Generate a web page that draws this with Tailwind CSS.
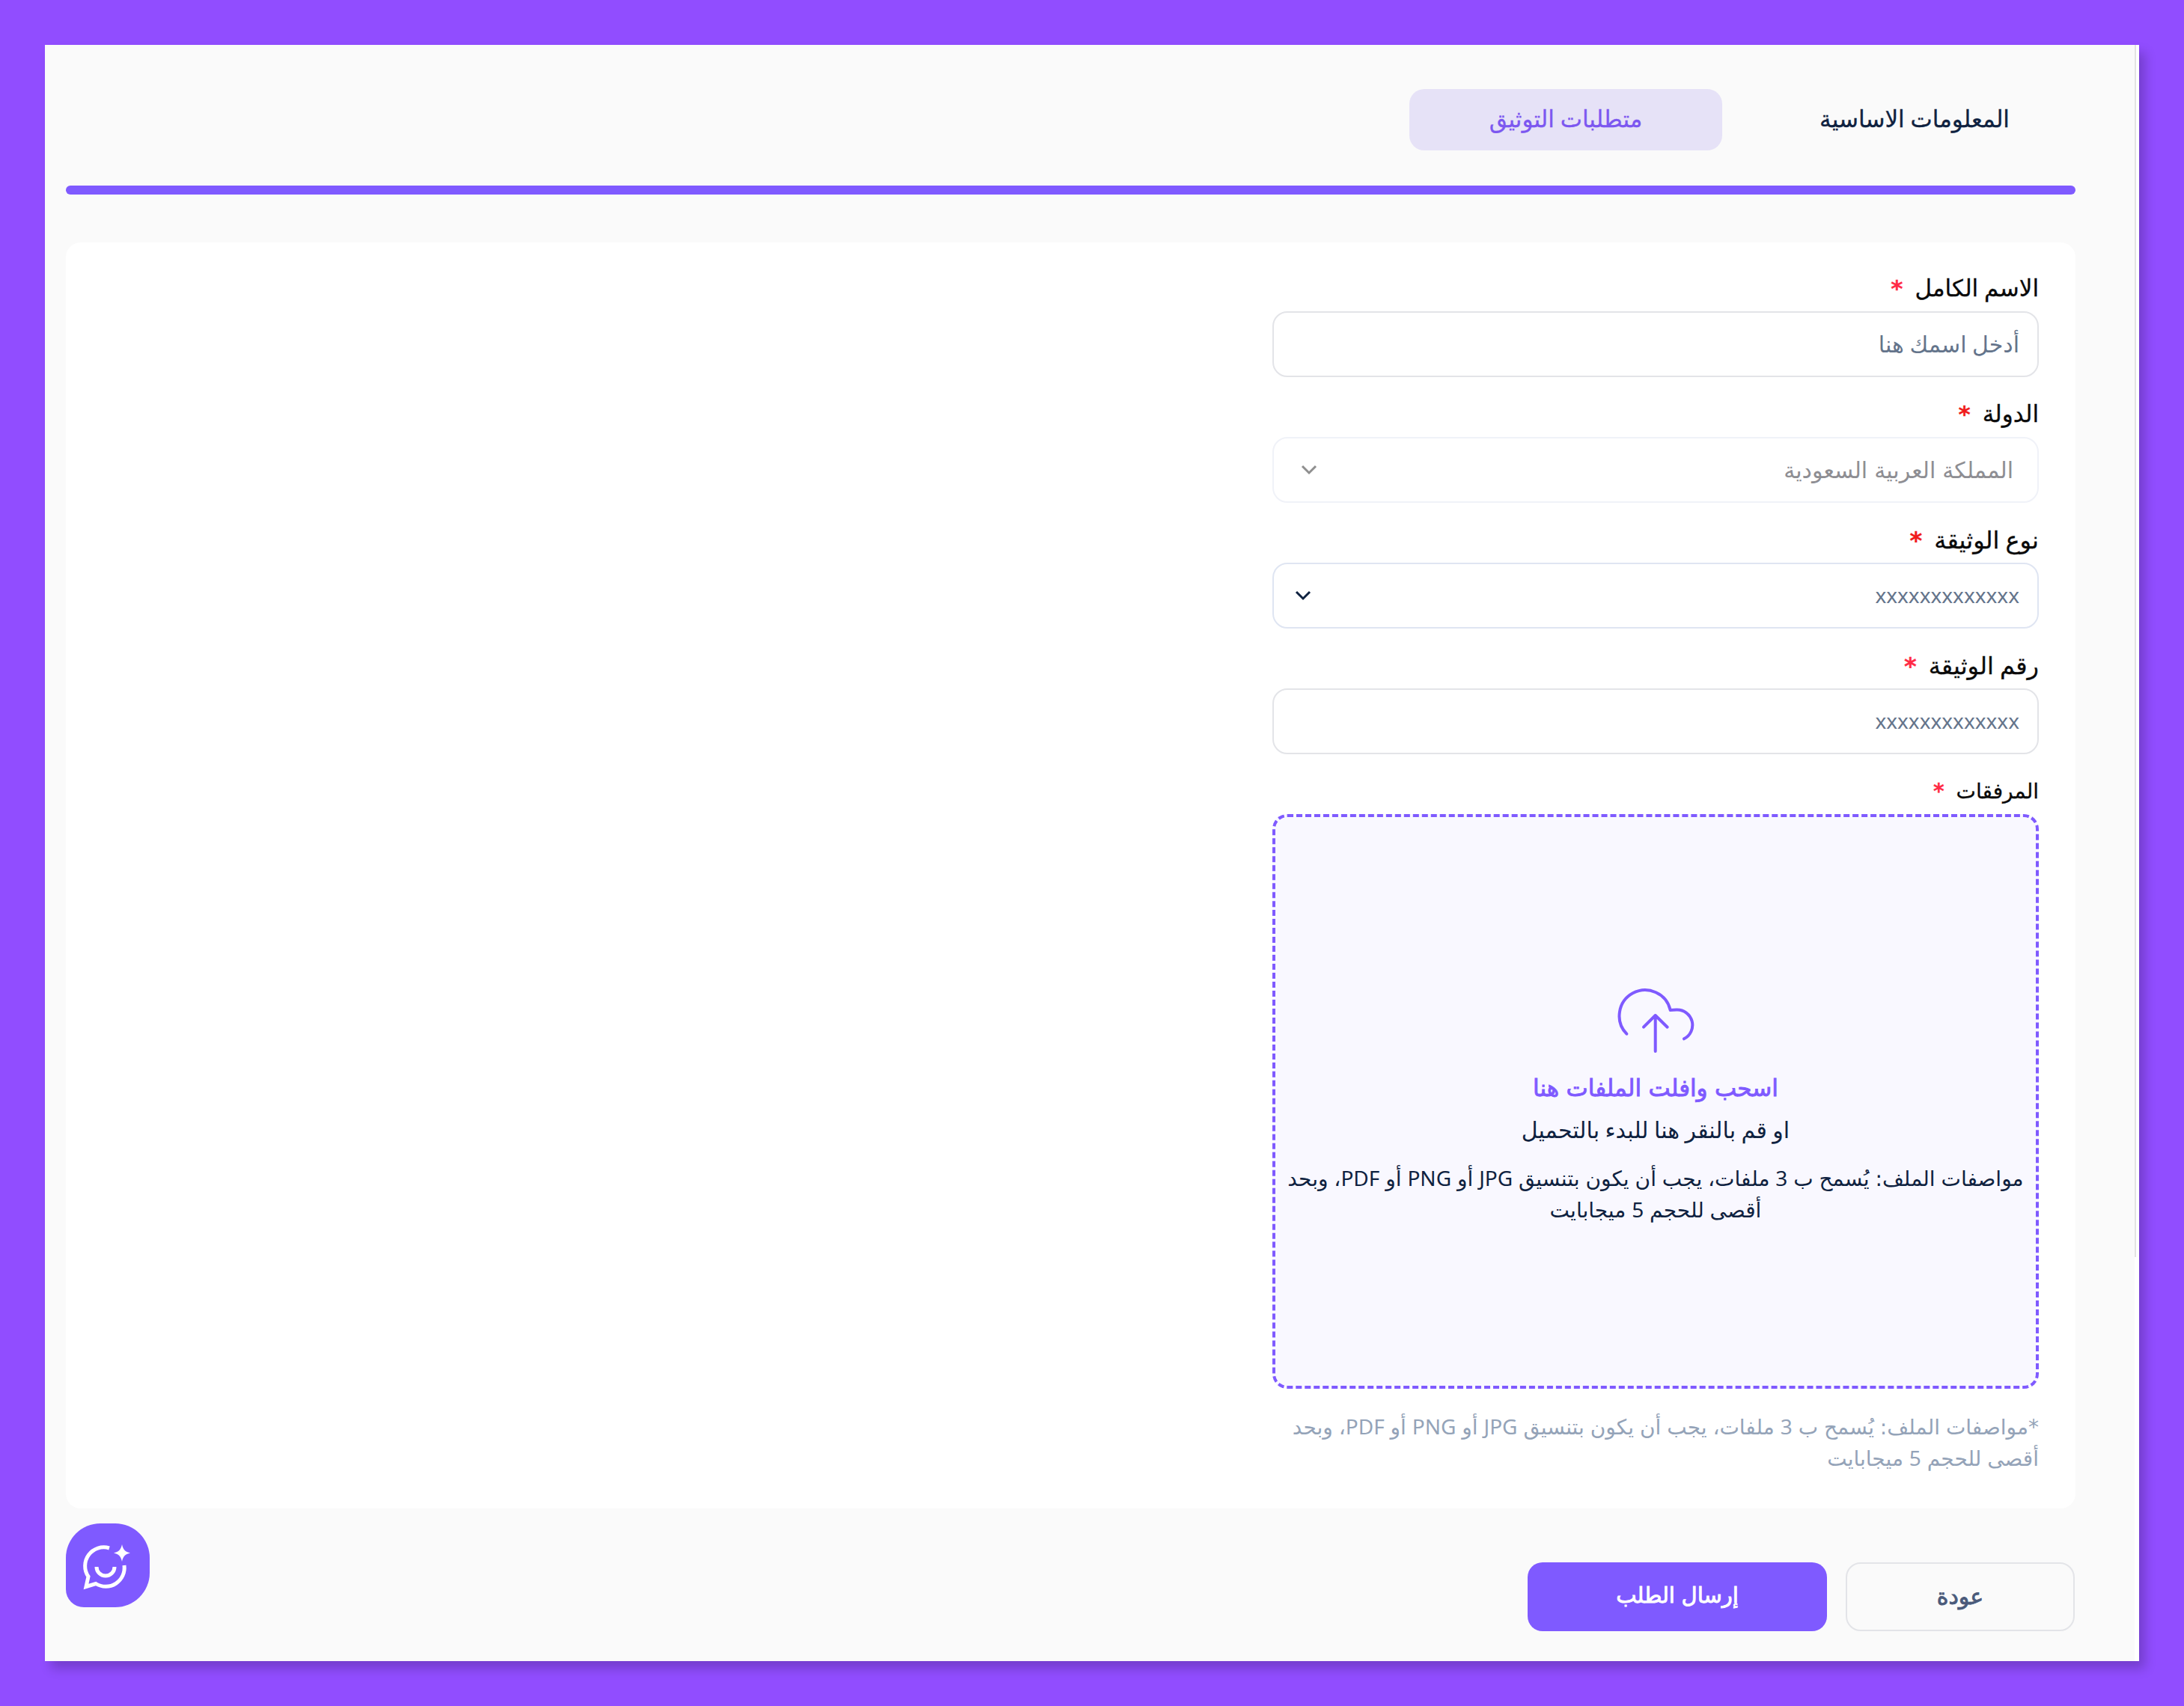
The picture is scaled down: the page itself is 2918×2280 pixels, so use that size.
<!DOCTYPE html>
<html dir="rtl" lang="ar"><head><meta charset="utf-8"><title>متطلبات التوثيق</title><script src="https://cdn.jsdelivr.net/npm/@tailwindcss/browser@4"></script></head>
<body class="m-0 bg-[#914dff]">
<div dir="ltr" class="w-[2918px] h-[2280px] p-[60px] font-['DejaVu_Sans',sans-serif] [word-spacing:-0.5px]">
<div dir="rtl" class="relative w-[2798px] h-[2160px] bg-[#fafafa] pr-[85px] pl-[28px] pt-[59px] flex flex-col shadow-[8px_10px_14px_rgba(0,0,0,0.2)]">
<div class="absolute top-0 bottom-0 right-0 w-[6px] bg-white"><div class="w-[2px] ml-auto h-[1620px] bg-[#e3e3e3] mr-[4px]"></div></div>
<div class="flex gap-[48px] h-[82px] mr-[6px] text-[31px] [word-spacing:-2px] [-webkit-text-stroke:0.3px_currentColor]">
<div class="w-[418px] pb-[2px] rounded-[20px] flex items-center justify-center text-[#0f2240]">المعلومات الاساسية</div>
<div class="w-[418px] pb-[2px] rounded-[20px] bg-[#e6e2f7] flex items-center justify-center text-[#7c57f0]">متطلبات التوثيق</div>
</div>
<div class="h-[12px] mt-[47px] rounded-full bg-[#7f5aff]"></div>
<div class="mt-[64px] h-[1692px] bg-white rounded-[20px] pr-[49px] pt-[40px] flex flex-col">
<div class="w-[1024px] flex flex-col text-[30px]">

<div class="h-[40px] pt-[3px] mb-[12px] flex items-center gap-[16px] text-[31px] text-[#0a0a0a] [word-spacing:-2px] [-webkit-text-stroke:0.3px_currentColor]"><span>الاسم الكامل</span><span class="font-bold text-[#ff2a45]">*</span></div>
<div class="h-[88px] mb-[28px] border-2 border-[#e3e4e8] rounded-[20px] px-[24px] flex items-center text-[#64748b] [word-spacing:-2px]">أدخل اسمك هنا</div>

<div class="h-[40px] pt-[3px] mb-[12px] flex items-center gap-[16px] text-[31px] text-[#0a0a0a] [-webkit-text-stroke:0.3px_currentColor]"><span>الدولة</span><span class="font-bold text-[#f01b1b]">*</span></div>
<div class="h-[88px] mb-[28px] border-2 border-[#f0f2f8] rounded-[20px] pr-[32px] pl-[36px] flex items-center justify-between text-[#8e8e93]"><span>المملكة العربية السعودية</span>
<svg class="w-[22px] h-[14px]" viewBox="0 0 22 14" fill="none" stroke="#8f8f8f" stroke-width="3"><path d="M2 2l9 9 9-9"/></svg></div>

<div class="h-[40px] pt-[3px] mb-[12px] flex items-center gap-[16px] text-[32px] text-[#0a0a0a] [word-spacing:-2px] [-webkit-text-stroke:0.3px_currentColor]"><span>نوع الوثيقة</span><span class="font-bold text-[#f01b1b]">*</span></div>
<div class="h-[88px] mb-[28px] border-2 border-[#dfe5f2] rounded-[20px] pr-[24px] pl-[28px] flex items-center justify-between font-['Noto_Sans'] text-[28px] text-[#64748b]"><span class="pb-[2px]">xxxxxxxxxxxxx</span>
<svg class="w-[22px] h-[14px]" viewBox="0 0 22 14" fill="none" stroke="#0f2240" stroke-width="3"><path d="M2 2l9 9 9-9"/></svg></div>

<div class="h-[40px] pt-[3px] mb-[12px] flex items-center gap-[16px] text-[32px] text-[#0a0a0a] [word-spacing:-2px] [-webkit-text-stroke:0.3px_currentColor]"><span>رقم الوثيقة</span><span class="font-bold text-[#ff2a45]">*</span></div>
<div class="h-[88px] mb-[28px] pb-[2px] border-2 border-[#e3e4e8] rounded-[20px] px-[24px] flex items-center font-['Noto_Sans'] text-[28px] text-[#64748b]">xxxxxxxxxxxxx</div>

<div class="h-[40px] pt-[3px] mb-[12px] flex items-center gap-[16px] text-[28px] text-[#0a0a0a] [-webkit-text-stroke:0.3px_currentColor]"><span>المرفقات</span><span class="font-bold text-[#ff2a45]">*</span></div>
<div class="h-[768px] border-4 border-dashed border-[#7f5aff] rounded-[20px] bg-[#f9f8ff] px-[12px] pt-[14px] flex flex-col items-center justify-center text-center text-[#0f2240]">
<svg class="w-[104px] h-[90px] mb-[24px]" viewBox="60 30 104 90" fill="none" stroke="#7f5aff" stroke-width="4" stroke-linecap="round" stroke-linejoin="round"><path d="M73.3 91.7A34.5 34.5 0 1 1 131.7 60L140 59.5A20.5 20.5 0 0 1 150 98.3"/><path d="M111.7 115V67M96 82.7L111.7 67 127.7 82.7"/></svg>
<div class="text-[31px] text-[#7f5aff] leading-[40px] mb-[17px] [-webkit-text-stroke:0.9px_currentColor]">اسحب وافلت الملفات هنا</div>
<div class="leading-[40px] mb-[23px] [word-spacing:-2px]">او قم بالنقر هنا للبدء بالتحميل</div>
<div class="leading-[41px] text-[28px] [word-spacing:-1px]">مواصفات الملف: يُسمح ب <span class="font-['Noto_Sans']">3</span> ملفات، يجب أن يكون بتنسيق <span class="font-['Noto_Sans']">JPG</span> أو <span class="font-['Noto_Sans']">PNG</span> أو <span class="font-['Noto_Sans']">PDF</span>، وبحد أقصى للحجم <span class="font-['Noto_Sans']">5</span> ميجابايت</div>
</div>
<div class="mt-[30px] leading-[40px] text-[28px] [word-spacing:-1px] text-[#94a3b8]">*مواصفات الملف: يُسمح ب <span class="font-['Noto_Sans']">3</span> ملفات، يجب أن يكون بتنسيق <span class="font-['Noto_Sans']">JPG</span> أو <span class="font-['Noto_Sans']">PNG</span> أو <span class="font-['Noto_Sans']">PDF</span>، وبحد أقصى للحجم <span class="font-['Noto_Sans']">5</span> ميجابايت</div>
</div>
</div>
<div class="mt-[72px] flex gap-[25px] mr-[1px] [-webkit-text-stroke:0.9px_currentColor]">
<div class="w-[306px] h-[92px] pb-[2px] border-2 border-[#e3e4e8] rounded-[20px] flex items-center justify-center text-[30px] text-[#4a5a7a]">عودة</div>
<div class="w-[400px] h-[92px] pb-[2px] bg-[#7f5aff] rounded-[20px] flex items-center justify-center text-[29px] text-white">إرسال الطلب</div>
</div>
<div class="absolute left-[28px] top-[1976px] w-[112px] h-[112px] bg-[#7f5aff] rounded-[46px] rounded-bl-[24px]">
<svg class="w-[112px] h-[112px]" viewBox="0 0 112 112" fill="none" stroke="#fff" stroke-width="5"><path d="M58 33A25 25 0 0 0 30 71L27 84.5 40 80.5A25 25 0 0 0 78 56"/><path d="M41 58A12 12 0 0 0 65 58"/><path fill="#fff" stroke="none" d="M75 28C76.5 35 79 38 86 39.5 79 41 76.5 44 75 51 73.5 44 71 41 64 39.5 71 38 73.5 35 75 28Z"/></svg>
</div>
</div>
</div>
</body></html>
